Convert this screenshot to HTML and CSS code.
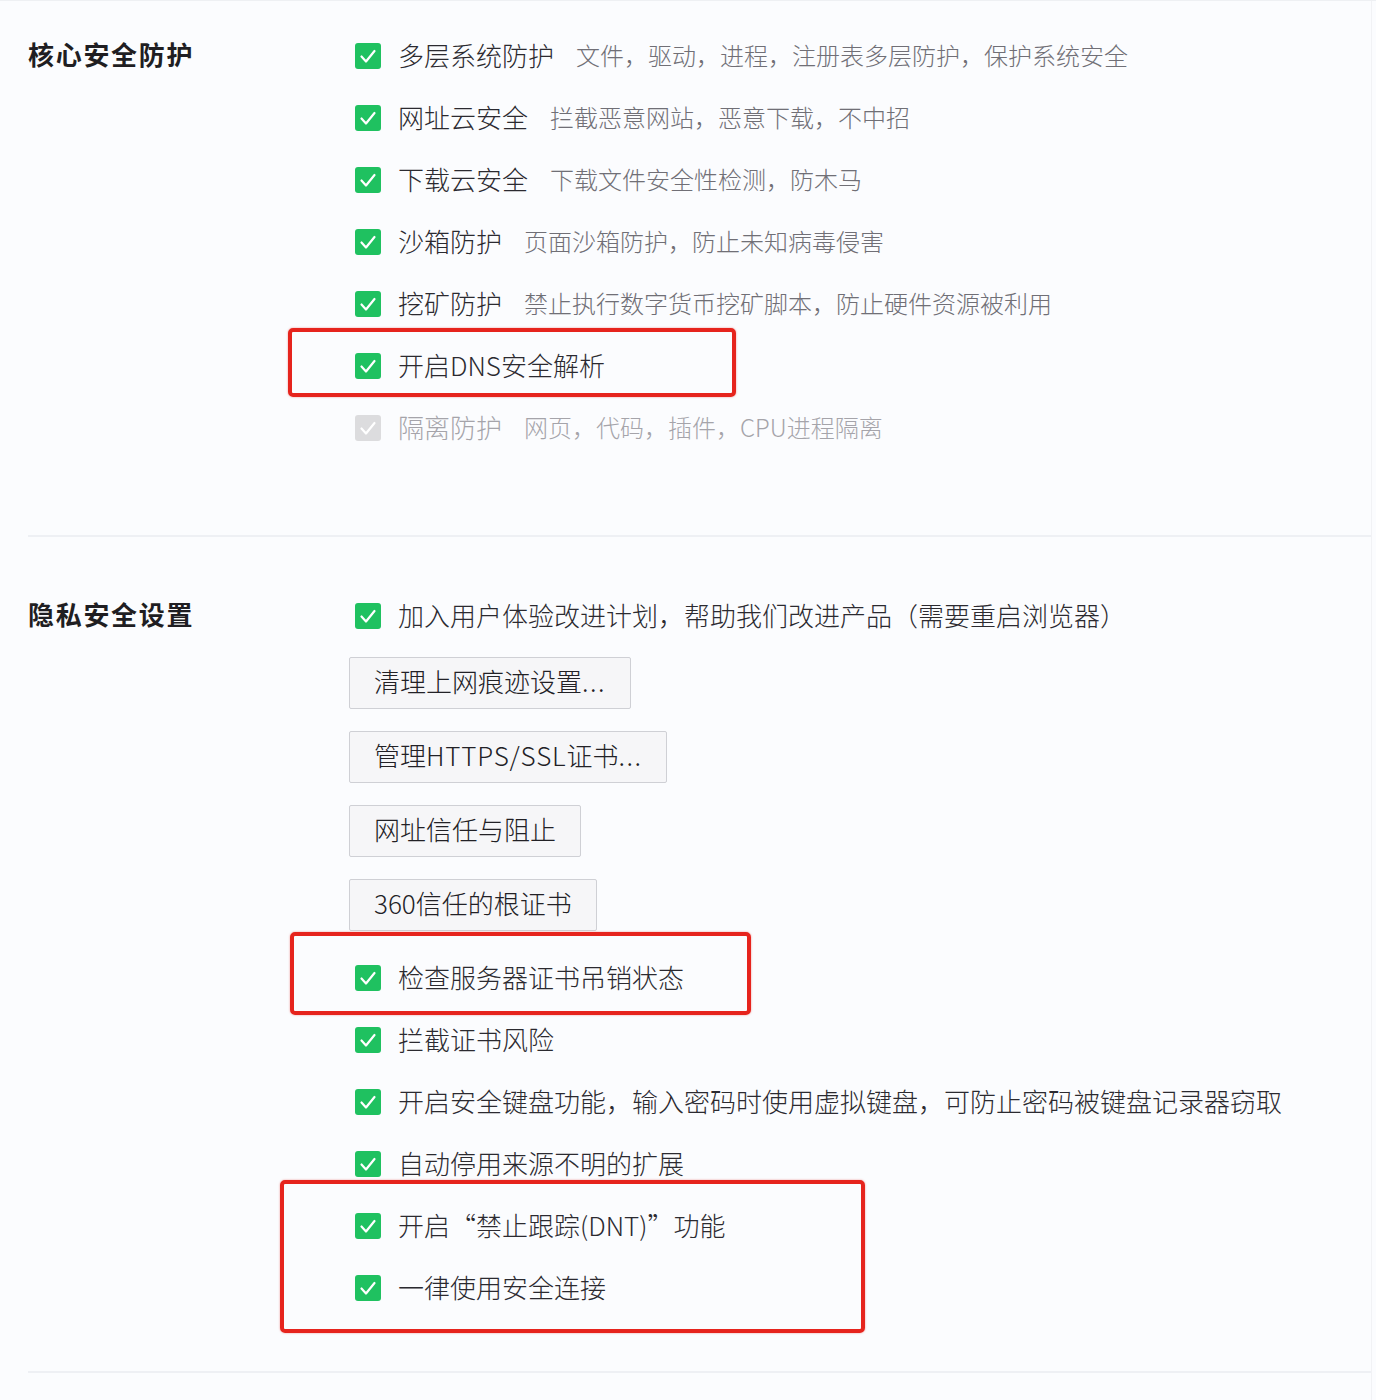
FILE: index.html
```html
<!DOCTYPE html>
<html lang="zh-CN">
<head>
<meta charset="utf-8">
<title>安全设置</title>
<link rel="stylesheet" href="styles.css">
</head>
<body>
<div class="page">
  <section class="section section-core">
    <h2 class="heading">核心安全防护</h2>
    <div class="items">
      <div class="row"><span class="cb"><svg viewBox="0 0 26 26"><path d="M6.5 13.5l4.5 5 8.5-10.5"/></svg></span><span class="label">多层系统防护</span><span class="desc">文件，驱动，进程，注册表多层防护，保护系统安全</span></div>
      <div class="row"><span class="cb"><svg viewBox="0 0 26 26"><path d="M6.5 13.5l4.5 5 8.5-10.5"/></svg></span><span class="label">网址云安全</span><span class="desc">拦截恶意网站，恶意下载，不中招</span></div>
      <div class="row"><span class="cb"><svg viewBox="0 0 26 26"><path d="M6.5 13.5l4.5 5 8.5-10.5"/></svg></span><span class="label">下载云安全</span><span class="desc">下载文件安全性检测，防木马</span></div>
      <div class="row"><span class="cb"><svg viewBox="0 0 26 26"><path d="M6.5 13.5l4.5 5 8.5-10.5"/></svg></span><span class="label">沙箱防护</span><span class="desc">页面沙箱防护，防止未知病毒侵害</span></div>
      <div class="row"><span class="cb"><svg viewBox="0 0 26 26"><path d="M6.5 13.5l4.5 5 8.5-10.5"/></svg></span><span class="label">挖矿防护</span><span class="desc">禁止执行数字货币挖矿脚本，防止硬件资源被利用</span></div>
      <div class="row marked">
        <span class="cb"><svg viewBox="0 0 26 26"><path d="M6.5 13.5l4.5 5 8.5-10.5"/></svg></span><span class="label">开启DNS安全解析</span>
        <span class="mark mark-dns"></span>
      </div>
      <div class="row disabled"><span class="cb"><svg viewBox="0 0 26 26"><path d="M6.5 13.5l4.5 5 8.5-10.5"/></svg></span><span class="label">隔离防护</span><span class="desc">网页，代码，插件，CPU进程隔离</span></div>
    </div>
  </section>

  <section class="section section-privacy">
    <h2 class="heading">隐私安全设置</h2>
    <div class="items">
      <div class="row"><span class="cb"><svg viewBox="0 0 26 26"><path d="M6.5 13.5l4.5 5 8.5-10.5"/></svg></span><span class="label">加入用户体验改进计划，帮助我们改进产品（需要重启浏览器）</span></div>
      <div class="buttons">
        <button class="btn" type="button">清理上网痕迹设置<span class="dots">...</span></button>
        <button class="btn" type="button">管理<span class="latin">HTTPS/SSL</span>证书<span class="dots">...</span></button>
        <button class="btn" type="button">网址信任与阻止</button>
        <button class="btn" type="button">360信任的根证书</button>
      </div>
      <div class="row marked">
        <span class="cb"><svg viewBox="0 0 26 26"><path d="M6.5 13.5l4.5 5 8.5-10.5"/></svg></span><span class="label">检查服务器证书吊销状态</span>
        <span class="mark mark-cert"></span>
      </div>
      <div class="row"><span class="cb"><svg viewBox="0 0 26 26"><path d="M6.5 13.5l4.5 5 8.5-10.5"/></svg></span><span class="label">拦截证书风险</span></div>
      <div class="row"><span class="cb"><svg viewBox="0 0 26 26"><path d="M6.5 13.5l4.5 5 8.5-10.5"/></svg></span><span class="label">开启安全键盘功能，输入密码时使用虚拟键盘，可防止密码被键盘记录器窃取</span></div>
      <div class="row"><span class="cb"><svg viewBox="0 0 26 26"><path d="M6.5 13.5l4.5 5 8.5-10.5"/></svg></span><span class="label">自动停用来源不明的扩展</span></div>
      <div class="group marked">
        <div class="row"><span class="cb"><svg viewBox="0 0 26 26"><path d="M6.5 13.5l4.5 5 8.5-10.5"/></svg></span><span class="label">开启“禁止跟踪(DNT)”功能</span></div>
        <div class="row"><span class="cb"><svg viewBox="0 0 26 26"><path d="M6.5 13.5l4.5 5 8.5-10.5"/></svg></span><span class="label">一律使用安全连接</span></div>
        <span class="mark mark-group"></span>
      </div>
    </div>
  </section>
</div>
</body>
</html>
```

FILE: styles.css
```css
* {
  box-sizing: border-box;
}

html, body {
  margin: 0;
  padding: 0;
  background: #fbfcfe;
}

body {
  font-family: "Noto Sans CJK SC", "Noto Sans", sans-serif;
  color: #2b2a30;
  border-top: 1px solid #eef0f3;
}

.page {
  width: 1372px;
  border-right: 1px solid #f1f2f5;
  min-height: 1400px;
}

.section {
  display: grid;
  grid-template-columns: 321px 1fr;
  margin-left: 28px;
  border-bottom: 2px solid #eef0f4;
}

.section-core {
  padding-top: 24px;
  padding-bottom: 76px;
}

.section-privacy {
  padding-top: 48px;
  padding-bottom: 52px;
}

.heading {
  margin: 0;
  font-size: 26px;
  font-weight: 700;
  line-height: 58px;
  height: 62px;
  color: #1f1e22;
  letter-spacing: 1.7px;
}

.items {
  display: flex;
  flex-direction: column;
}

.row {
  display: flex;
  align-items: center;
  height: 62px;
  font-size: 26px;
  font-weight: 300;
  white-space: nowrap;
}

.marked {
  position: relative;
}

.cb {
  width: 26px;
  height: 26px;
  margin-left: 6px;
  margin-right: 17px;
  border-radius: 3px;
  background: #1fc160;
  flex: none;
  display: flex;
}

.cb svg {
  width: 26px;
  height: 26px;
}

.cb path {
  fill: none;
  stroke: #ffffff;
  stroke-width: 2.2;
  stroke-linecap: round;
  stroke-linejoin: round;
}

.label {
  color: #2b2a30;
  margin-bottom: 4px;
}

.desc {
  margin-left: 22px;
  margin-bottom: 4px;
  font-size: 24px;
  color: #706f76;
}

.disabled .cb {
  background: #dcdcde;
}

.disabled .label,
.disabled .desc {
  color: #a5a4aa;
}

.buttons {
  display: flex;
  flex-direction: column;
  align-items: flex-start;
  gap: 22px;
  margin: 10px 0 16px;
}

.btn {
  height: 52px;
  padding: 0 24px 4px;
  border: 1px solid #cfd0d5;
  border-radius: 2px;
  background: #f6f6f8;
  font-family: "Noto Sans CJK SC", "Noto Sans", sans-serif;
  font-size: 26px;
  font-weight: 300;
  color: #222126;
  line-height: 46px;
}

.dots {
  letter-spacing: 1.5px;
}

.latin {
  letter-spacing: 0.8px;
}

.mark {
  position: absolute;
  border: 4px solid #e6241d;
  border-radius: 5px;
  box-shadow: 0 0 2px rgba(230, 36, 29, 0.5);
  pointer-events: none;
}

.mark-dns {
  left: -61px;
  top: -7px;
  width: 448px;
  height: 69px;
}

.mark-cert {
  left: -59px;
  top: -15px;
  width: 461px;
  height: 83px;
}

.mark-group {
  left: -69px;
  top: -15px;
  width: 585px;
  height: 153px;
}
```
